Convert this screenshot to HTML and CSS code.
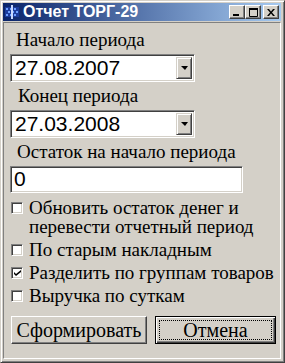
FILE: index.html
```html
<!DOCTYPE html>
<html lang="ru">
<head>
    <meta charset="UTF-8">
    <title>Отчет ТОРГ-29</title>
    <link rel="stylesheet" href="styles.css">
</head>
<body>
    <div class="window">
        <div class="titlebar">
            <svg class="app-icon" width="16" height="16" viewBox="0 0 16 16">
                <rect x="1" y="3" width="14" height="10" fill="#1c3c9c"/>
                <g fill="#6ea0ff">
                    <rect x="2" y="4" width="2" height="2"/><rect x="6" y="4" width="2" height="2"/><rect x="10" y="4" width="2" height="2"/>
                    <rect x="4" y="7" width="2" height="2"/><rect x="8" y="7" width="2" height="2"/><rect x="12" y="7" width="2" height="2"/>
                    <rect x="2" y="10" width="2" height="2"/><rect x="6" y="10" width="2" height="2"/><rect x="10" y="10" width="2" height="2"/>
                </g>
                <rect x="7" y="1" width="2" height="14" fill="#c8d8ff"/>
            </svg>
            <span class="title">Отчет ТОРГ-29</span>
            <div class="caption-buttons">
                <button class="cap-btn">
                    <svg width="8" height="7" viewBox="0 0 8 7"><rect x="0" y="5" width="6" height="2" fill="#000"/></svg>
                </button>
                <button class="cap-btn">
                    <svg width="9" height="9" viewBox="0 0 9 9"><path d="M0.5 1.5h8v7h-8z" fill="none" stroke="#000"/><rect x="0" y="0" width="9" height="2" fill="#000"/></svg>
                </button>
                <button class="cap-btn close">
                    <svg width="8" height="7" viewBox="0 0 8 7"><path d="M0 0h2l2 2.5 2-2.5h2l-3 3.5 3 3.5h-2l-2-2.5-2 2.5h-2l3-3.5z" fill="#000"/></svg>
                </button>
            </div>
        </div>

        <div class="client">
            <div class="field-label first">Начало периода</div>
            <div class="combo">
                <span class="combo-value">27.08.2007</span>
                <span class="combo-btn"><span class="arrow"></span></span>
            </div>

            <div class="field-label second">Конец периода</div>
            <div class="combo">
                <span class="combo-value">27.03.2008</span>
                <span class="combo-btn"><span class="arrow"></span></span>
            </div>

            <div class="field-label third">Остаток на начало периода</div>
            <div class="textbox">0</div>

            <div class="check wrap">
                <span class="box"></span>
                <span class="check-text">Обновить остаток денег и<br>перевести отчетный период</span>
            </div>
            <div class="check">
                <span class="box"></span>
                <span class="check-text">По старым накладным</span>
            </div>
            <div class="check">
                <span class="box checked">
                    <svg width="7" height="7" viewBox="0 0 7 7"><path d="M0 2l2 2 5-4v2l-5 4-2-2z" fill="#000"/></svg>
                </span>
                <span class="check-text">Разделить по группам товаров</span>
            </div>
            <div class="check">
                <span class="box"></span>
                <span class="check-text">Выручка по суткам</span>
            </div>

            <div class="actions">
                <button class="push form">Сформировать</button>
                <button class="push cancel default"><span class="focus">Отмена</span></button>
            </div>
        </div>
    </div>
</body>
</html>
```

FILE: styles.css
```css
* {
    margin: 0;
    padding: 0;
    box-sizing: border-box;
}

body {
    background: #d4d0c8;
    font-family: 'Liberation Serif', serif;
}

.window {
    width: 285px;
    height: 363px;
    display: flex;
    flex-direction: column;
    background: #d4d0c8;
    border: 1px solid;
    border-color: #d4d0c8 #404040 #404040 #d4d0c8;
    box-shadow: inset 1px 1px #fff, inset -1px -1px #808080;
    padding: 2px 3px 3px 2px;
}

.titlebar {
    height: 18px;
    display: flex;
    align-items: center;
    background: linear-gradient(90deg, #0a246a, #a6caf0);
    padding: 0 2px 0 1px;
}

.app-icon {
    flex: none;
}

.title {
    margin-left: 3px;
    color: #fff;
    font: bold 16px/18px 'Liberation Sans', sans-serif;
    flex: 1;
}

.caption-buttons {
    display: flex;
}

.cap-btn {
    width: 16px;
    height: 14px;
    background: #d4d0c8;
    border: 1px solid;
    border-color: #fff #404040 #404040 #fff;
    box-shadow: inset -1px -1px #808080;
    display: flex;
    align-items: center;
    justify-content: center;
}

.cap-btn.close {
    margin-left: 2px;
}

.client {
    flex: 1;
    margin-top: 1px;
    border: 1px solid;
    border-color: #808080 #fff #fff #808080;
    padding: 0 0 0 6px;
}

.field-label {
    font-size: 19px;
    line-height: 21px;
    color: #000;
}

.field-label.first {
    margin-top: 6px;
    padding-left: 6px;
}

.field-label.second {
    margin-top: 3px;
    padding-left: 8px;
}

.field-label.third {
    margin-top: 3px;
    padding-left: 7px;
}

.combo, .textbox {
    margin-top: 4px;
    background: #fff;
    border: 1px solid;
    border-color: #808080 #fff #fff #808080;
    box-shadow: inset 1px 1px #404040, inset -1px -1px #d4d0c8;
}

.combo {
    width: 185px;
    height: 28px;
    display: flex;
    align-items: center;
    padding: 2px;
}

.combo-value {
    flex: 1;
    padding-left: 2px;
    font: 21px/22px 'Liberation Sans', sans-serif;
}

.combo-btn {
    width: 16px;
    height: 22px;
    background: #d4d0c8;
    border: 1px solid;
    border-color: #d4d0c8 #404040 #404040 #d4d0c8;
    box-shadow: inset 1px 1px #fff, inset -1px -1px #808080;
    display: flex;
    align-items: center;
    justify-content: center;
}

.arrow {
    width: 0;
    height: 0;
    border-left: 4px solid transparent;
    border-right: 3px solid transparent;
    border-top: 4px solid #000;
}

.textbox {
    width: 233px;
    height: 27px;
    padding: 1px 0 0 3px;
    font: 21px/22px 'Liberation Sans', sans-serif;
}

.check {
    display: flex;
    align-items: flex-start;
    margin-top: 4px;
    padding-left: 1px;
    font-size: 19px;
    line-height: 19px;
}

.check.wrap {
    margin-top: 5px;
    margin-bottom: 1px;
}

.box {
    flex: none;
    width: 12px;
    height: 12px;
    margin-top: 4px;
    margin-right: 6px;
    background: #fff;
    border: 1px solid;
    border-color: #808080 #fff #fff #808080;
    box-shadow: inset 1px 1px #404040, inset -1px -1px #d4d0c8;
    display: flex;
    align-items: center;
    justify-content: center;
}

.actions {
    display: flex;
    gap: 8px;
    margin-top: 11px;
    padding-left: 1px;
}

.push {
    height: 28px;
    background: #d4d0c8;
    border: 1px solid;
    border-color: #fff #404040 #404040 #fff;
    box-shadow: inset -1px -1px #808080;
    font: 20px 'Liberation Serif', serif;
    color: #000;
}

.push.form {
    width: 136px;
}

.push.cancel {
    width: 121px;
    padding: 3px;
}

.push.default {
    border: 1px solid #000;
    box-shadow: inset 1px 1px #fff, inset -1px -1px #404040, inset -2px -2px #808080;
}

.focus {
    display: block;
    height: 100%;
    line-height: 18px;
    border: 1px dotted #000;
}
```
